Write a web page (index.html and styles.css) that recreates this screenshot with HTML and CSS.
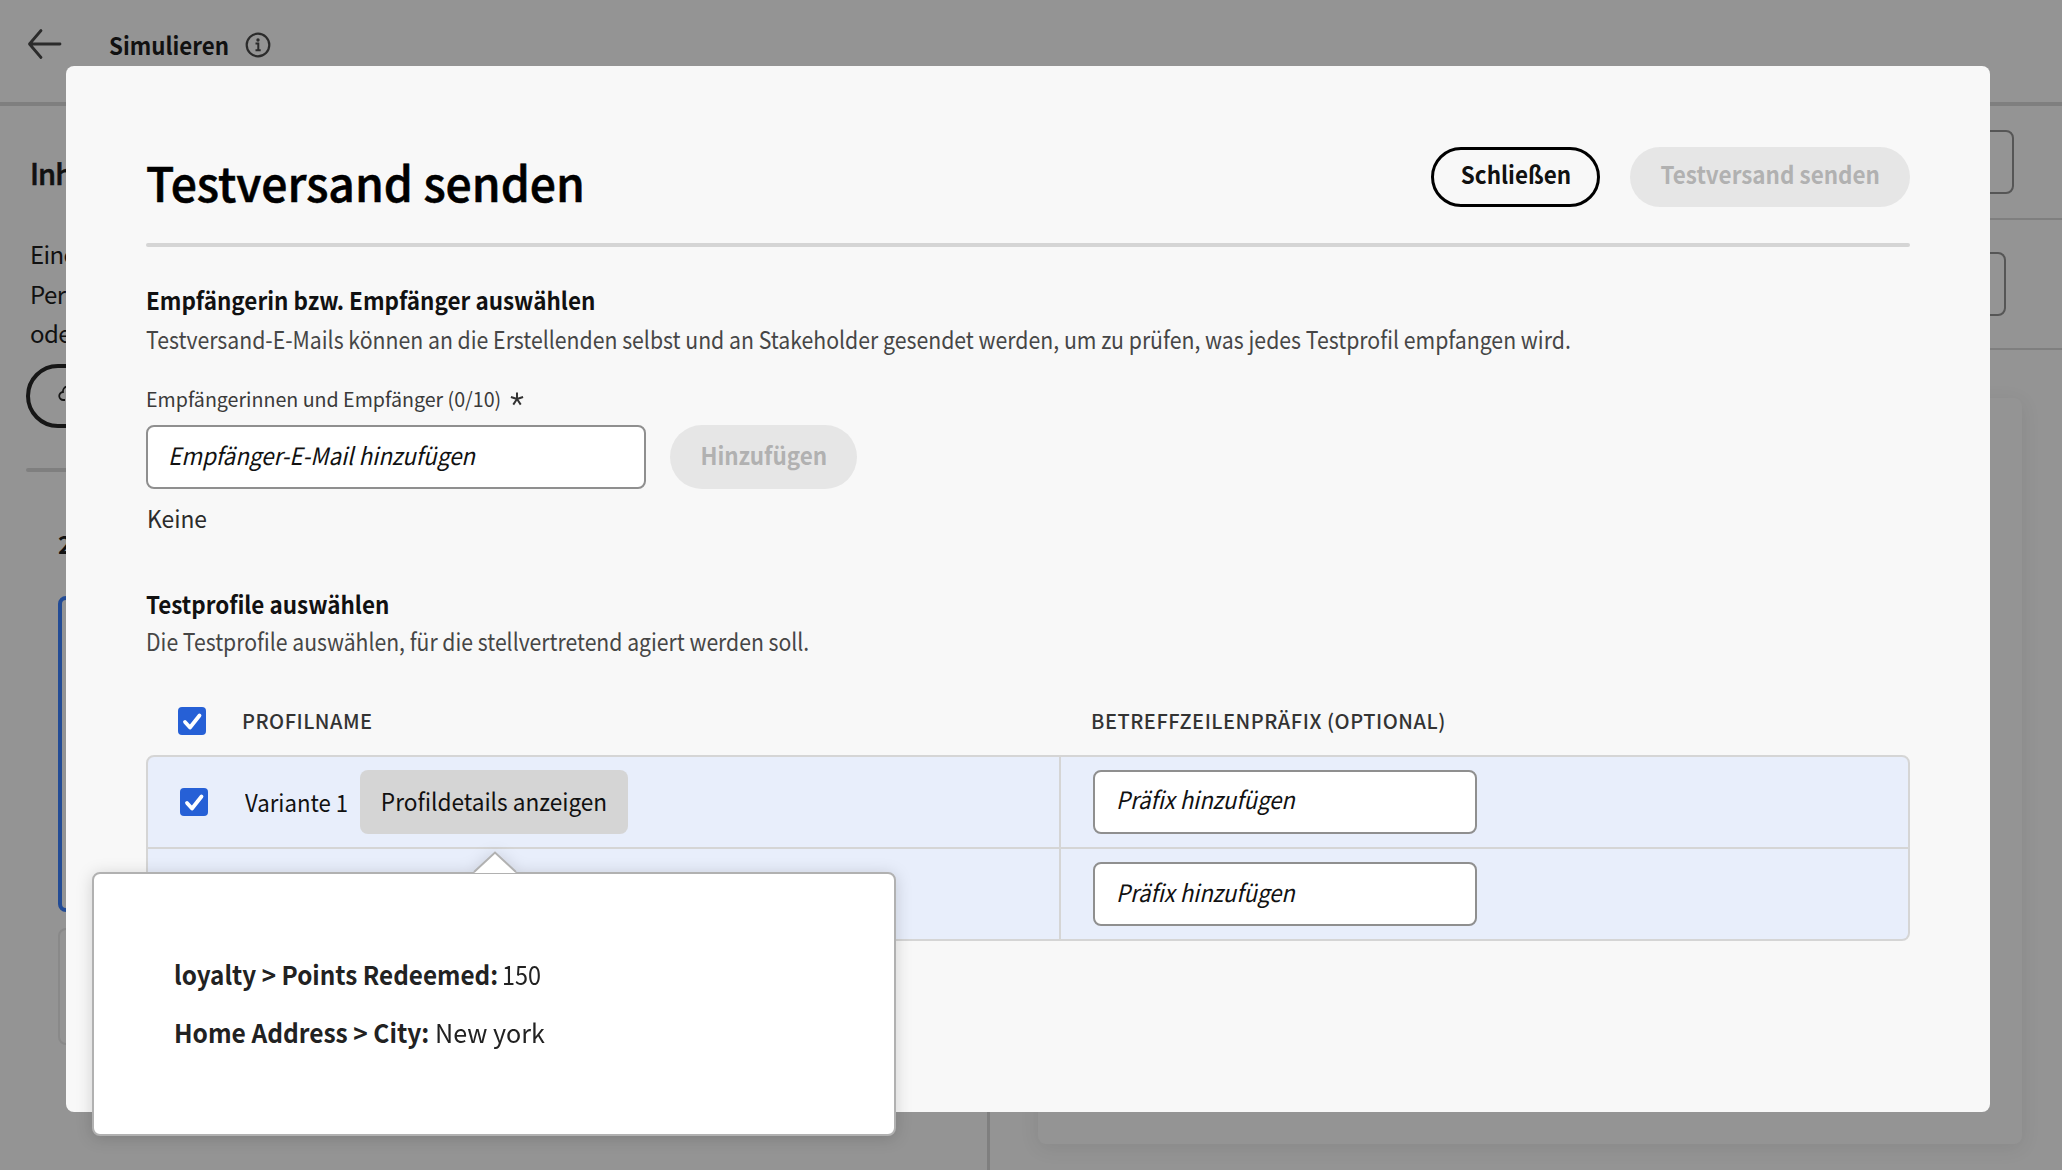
FILE: index.html
```html
<!DOCTYPE html>
<html lang="de">
<head>
<meta charset="utf-8">
<title>Testversand senden</title>
<link rel="stylesheet" href="styles.css">
</head>
<body>
<div class="app">
  <header class="topbar">
    <svg class="back" viewBox="0 0 36 36" width="36" height="36"><path d="M15 4.500 3.500 18 15 31.500M3.500 18H34" fill="none" stroke="#2b2b2b" stroke-width="2.800" stroke-linecap="round" stroke-linejoin="round"/></svg>
    <span class="topbar-title">Simulieren</span>
    <svg class="info" viewBox="0 0 26 26" width="26" height="26"><circle cx="13" cy="13" r="11.300" fill="none" stroke="#2b2b2b" stroke-width="2.200"/><circle cx="13" cy="8" r="1.700" fill="#2b2b2b"/><path d="M10.500 11.500H13.300V18M10.500 18.200H15.700" fill="none" stroke="#2b2b2b" stroke-width="2"/></svg>
  </header>
  <div class="workspace">
    <aside class="side">
      <h3 class="side-title">Inhalt</h3>
      <p class="side-text">Eine<br>Per<br>oder</p>
      <div class="side-button"><svg viewBox="0 0 24 22" width="24" height="22"><path d="M7 19H5.500A4 4 0 0 1 5 11A5 5 0 0 1 9 5.500A6 6 0 0 1 18 8A5.500 5.500 0 0 1 18 19" fill="none" stroke="#161616" stroke-width="1.800"/></svg></div>
      <div class="side-rule"></div>
      <div class="side-count">2</div>
      <div class="variant variant-active"></div>
      <div class="variant"></div>
    </aside>
    <section class="preview">
      <div class="preview-bar"><div class="field-a"></div></div>
      <div class="preview-bar preview-bar-tall"><div class="field-b"></div></div>
      <div class="preview-card"></div>
    </section>
  </div>
</div>

<main class="dialog">
  <header class="dialog-head">
    <h1>Testversand senden</h1>
    <button class="btn btn-outline"><span>Schließen</span></button>
    <button class="btn btn-send"><span>Testversand senden</span></button>
  </header>
  <div class="rule"></div>

  <h2 class="h-recipients">Empfängerin bzw. Empfänger auswählen</h2>
  <p class="note note-recipients">Testversand-E-Mails können an die Erstellenden selbst und an Stakeholder gesendet werden, um zu prüfen, was jedes Testprofil empfangen wird.</p>
  <div class="label"><span>Empfängerinnen und Empfänger (0/10)</span><svg viewBox="0 0 12 12" width="14" height="14"><path d="M6 6V.5M6 6 .8 4.300M6 6 11.200 4.300M6 6 2.800 10.800M6 6 9.200 10.800" stroke="#333" stroke-width="1.700" fill="none"/></svg></div>
  <div class="add-row">
    <div class="input input-mail"><span>Empfänger-E-Mail hinzufügen</span></div>
    <button class="btn btn-add"><span>Hinzufügen</span></button>
  </div>
  <p class="none">Keine</p>

  <h2 class="h-profiles">Testprofile auswählen</h2>
  <p class="note note-profiles">Die Testprofile auswählen, für die stellvertretend agiert werden soll.</p>

  <div class="thead">
    <svg class="check" viewBox="0 0 28 28" width="28" height="28"><rect width="28" height="28" rx="4" fill="#2660d6"/><path d="M7 15 12 20.500 21.500 8.500" fill="none" stroke="#fff" stroke-width="3.800" stroke-linecap="round" stroke-linejoin="round"/></svg>
    <span class="th-name">PROFILNAME</span>
    <span class="th-prefix">BETREFFZEILENPRÄFIX (OPTIONAL)</span>
  </div>
  <div class="table">
    <div class="cell">
      <svg class="check" viewBox="0 0 28 28" width="28" height="28"><rect width="28" height="28" rx="4" fill="#2660d6"/><path d="M7 15 12 20.500 21.500 8.500" fill="none" stroke="#fff" stroke-width="3.800" stroke-linecap="round" stroke-linejoin="round"/></svg>
      <span class="variant-name">Variante 1</span>
      <button class="details"><span>Profildetails anzeigen</span></button>
    </div>
    <div class="cell"><div class="input input-prefix"><span>Präfix hinzufügen</span></div></div>
    <div class="cell"></div>
    <div class="cell"><div class="input input-prefix input-prefix-second"><span>Präfix hinzufügen</span></div></div>
  </div>
</main>

<div class="popover">
  <svg class="tip" viewBox="0 0 44 22" width="44" height="22"><path d="M1 22 22 1.500 43 22Z" fill="#fff"/><path d="M1 21 22 1.500 43 21" fill="none" stroke="#b1b1b1" stroke-width="2"/></svg>
  <p class="fact"><b class="fact-points">loyalty &gt; Points Redeemed:</b><span class="fact-150">150</span></p>
  <p class="fact"><b class="fact-city">Home Address &gt; City:</b><span class="fact-ny">New york</span></p>
</div>
</body>
</html>
```
FILE: styles.css
```css
* { box-sizing: border-box; margin: 0; padding: 0; }

body {
  position: relative;
  width: 2062px;
  height: 1170px;
  overflow: hidden;
  background: #949494;
  color: #111;
  font: 24px/30px "Noto Sans CJK SC", "Source Sans Pro", sans-serif;
  white-space: nowrap;
}

svg { display: block; flex: none; }
span, b, h1, h2, p { transform-origin: 0 50%; }

/* page behind the dialog */
.app { display: flex; flex-direction: column; height: 100%; }
.topbar { display: flex; height: 106px; padding: 26px 0 0 26px; border-bottom: 4px solid #7f7f7f; }
.topbar-title { width: 119px; margin: 4px 17px 0 47px; font-weight: 700; transform: scaleX(.93); }
.info { margin: 6px 0 0; }
.workspace { display: flex; flex: 1; }
.side { width: 990px; padding: 51px 0 0 26px; border-right: 3px solid #7f7f7f; }
.side-title { padding-left: 4px; font-size: 29px; font-weight: 500; line-height: 30px; letter-spacing: -.9px; -webkit-text-stroke: .6px #111; }
.side-text { margin-top: 47px; padding-left: 4px; line-height: 39.500px; letter-spacing: -.6px; }
.side-button { display: flex; align-items: center; width: 300px; height: 64px; margin-top: 11px; padding: 0 0 8px 28px; border: 4px solid #161616; border-radius: 32px; }
.side-rule { width: 900px; height: 4px; margin-top: 40px; border-radius: 2px; background: #7f7f7f; }
.side-count { height: 30px; margin: 57px 0 0 32px; font-weight: 700; }
.variant { width: 800px; height: 117px; margin: 16px 0 0 32px; border: 2px solid #898989; border-radius: 8px; }
.variant-active { height: 316px; margin-top: 37px; border: 4px solid #224b95; }
.preview { display: flex; flex: 1; flex-direction: column; }
.preview-bar { height: 114px; padding: 24px 48px 0 48px; border-bottom: 2px solid #7f7f7f; }
.preview-bar-tall { height: 130px; padding: 32px 56px 0 48px; }
.field-a, .field-b { height: 64px; border: 2px solid #565656; border-radius: 8px; }
.preview-card { width: 984px; height: 746px; margin: 48px 0 0 48px; border-radius: 8px; background: #949494; box-shadow: 0 4px 20px rgba(0, 0, 0, .08); }

/* dialog */
.dialog { position: absolute; left: 66px; top: 66px; width: 1924px; height: 1046px; padding: 81px 80px 0; border-radius: 8px; background: #f8f8f8; }
.dialog-head { display: flex; height: 60px; }
h1 { margin: 4px auto 0 0; color: #000; font-size: 48px; font-weight: 500; line-height: 60px; transform: scaleX(.964); -webkit-text-stroke: .6px #000; }
h2 { font-size: 24px; }
.btn { display: flex; align-items: center; justify-content: center; height: 60px; padding-bottom: 6px; border: 0; border-radius: 32px; background: #e6e6e6; color: #b1b1b1; font: inherit; font-weight: 700; }
.btn span { transform: scaleX(.935); transform-origin: 50% 50%; }
.btn-outline { width: 169px; margin-right: 30px; border: 3px solid #000; background: none; color: #111; }
.btn-send { width: 280px; }
.rule { height: 4px; margin-top: 36px; border-radius: 2px; background: #d5d5d5; }
.h-recipients { margin-top: 36px; line-height: 34px; transform: scaleX(.936); }
.note { color: #464646; }
.note-recipients { line-height: 43px; transform: scaleX(.885); }
.label { display: flex; align-items: center; margin-top: 24px; color: #3a3a3a; font-size: 20px; }
.label span { width: 364px; transform: scaleX(.981); }
.add-row { display: flex; gap: 24px; margin-top: 11px; }
.input { display: flex; align-items: center; height: 64px; padding-bottom: 5px; border: 2px solid #8f8f8f; border-radius: 8px; background: #fff; font-style: italic; }
.input-mail { width: 500px; padding: 0 0 4px 20px; }
.input-mail span { transform: scaleX(.932); }
.btn-add { width: 187px; height: 64px; padding-bottom: 4px; }
.none { margin-top: 14px; padding-left: 1px; color: #2b2b2b; transform: scaleX(.95); }
.h-profiles { margin-top: 56px; transform: scaleX(.935); }
.note-profiles { margin-top: 7px; transform: scaleX(.882); }

.thead { display: flex; align-items: center; height: 30px; margin-top: 50px; padding-left: 32px; color: #333; font-size: 20px; font-weight: 500; }
.th-name { width: 849px; margin: -1px 0 0 36px; letter-spacing: .5px; }
.th-prefix { letter-spacing: .54px; }
.table { display: grid; grid-template-columns: 911px 1fr; grid-template-rows: 90px 90px; gap: 2px; height: 186px; margin-top: 19px; border: 2px solid #d5d5d5; border-radius: 8px; background: #d5d5d5; overflow: hidden; }
.cell { display: flex; align-items: center; padding-left: 32px; background: #e8eefb; }
.variant-name { width: 115px; margin-left: 37px; transform: scaleX(.925); }
.details { width: 268px; height: 64px; padding: 0 0 3px; border: 0; border-radius: 8px; background: #d5d5d5; color: #111; font: inherit; }
.details span { display: block; margin: 0 -10px; transform: scaleX(.942); transform-origin: 50% 50%; }
.input-prefix { width: 384px; padding: 0 0 6px 21px; }
.input-prefix-second { padding-bottom: 4px; }
.input-prefix span { transform: scaleX(.921); }

/* profile details popover */
.popover { position: absolute; left: 92px; top: 872px; width: 804px; height: 264px; padding: 85px 0 0 80px; border: 2px solid #b1b1b1; border-radius: 8px; background: #fff; color: #222; font-size: 26px; filter: drop-shadow(0 2px 8px rgba(0, 0, 0, .16)); }
.tip { position: absolute; left: 379px; top: -23px; }
.fact { display: flex; height: 30px; margin-bottom: 28px; }
.fact-points { width: 328px; transform: scaleX(.934); }
.fact-150 { transform: scaleX(.9); }
.fact-city { width: 261px; transform: scaleX(.944); }
.fact-ny { transform: scaleX(.967); }
```
